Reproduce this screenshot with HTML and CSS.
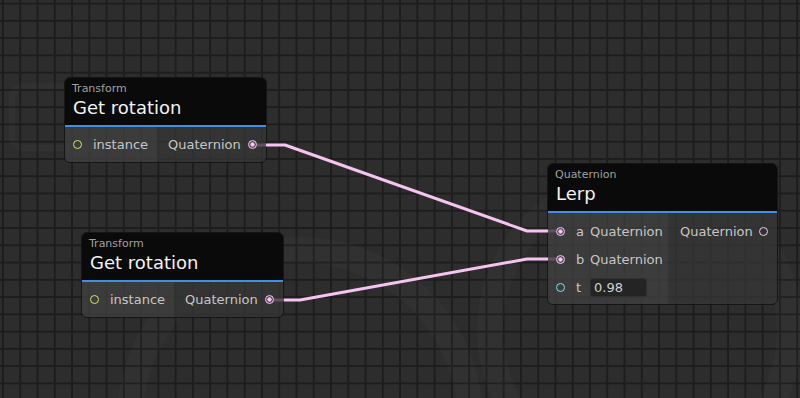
FILE: index.html
```html
<!DOCTYPE html>
<html lang="en">
<head>
  <meta charset="UTF-8">
  <meta name="viewport" content="width=device-width, initial-scale=1.0">
  <title>Node graph</title>
  <link rel="stylesheet" href="styles.css">
</head>
<body>

  <div class="canvas">

    <!-- faint logo behind the grid nodes -->
    <svg class="backdrop" width="800" height="398" viewBox="0 0 800 398">
      <g fill="none" stroke="#ffffff" stroke-opacity="0.018">
        <rect x="12" y="86" width="90" height="62" rx="12" stroke-width="7"/>
        <circle cx="300" cy="420" r="170" stroke-width="26"/>
        <circle cx="640" cy="330" r="150" stroke-width="26"/>
      </g>
    </svg>

    <!-- Get rotation #1 -->
    <div class="node node-rot1">
      <div class="node-head">
        <div class="node-cat">Transform</div>
        <div class="node-title">Get rotation</div>
      </div>
      <div class="node-body">
        <div class="col-in">
          <div class="row">
            <span class="port port-lime"></span>
            <span class="label">instance</span>
          </div>
        </div>
        <div class="col-out">
          <div class="row row-out">
            <span class="label">Quaternion</span>
            <span class="port port-pink linked"></span>
          </div>
        </div>
      </div>
    </div>

    <!-- Get rotation #2 -->
    <div class="node node-rot2">
      <div class="node-head">
        <div class="node-cat">Transform</div>
        <div class="node-title">Get rotation</div>
      </div>
      <div class="node-body">
        <div class="col-in">
          <div class="row">
            <span class="port port-lime"></span>
            <span class="label">instance</span>
          </div>
        </div>
        <div class="col-out">
          <div class="row row-out">
            <span class="label">Quaternion</span>
            <span class="port port-pink linked"></span>
          </div>
        </div>
      </div>
    </div>

    <!-- Lerp -->
    <div class="node node-lerp">
      <div class="node-head">
        <div class="node-cat">Quaternion</div>
        <div class="node-title">Lerp</div>
      </div>
      <div class="node-body body-tall">
        <div class="col-in col-wide">
          <div class="row">
            <span class="port port-pink linked"></span>
            <span class="pin-name">a</span>
            <span class="label">Quaternion</span>
          </div>
          <div class="row">
            <span class="port port-pink linked"></span>
            <span class="pin-name">b</span>
            <span class="label">Quaternion</span>
          </div>
          <div class="row">
            <span class="port port-cyan"></span>
            <span class="pin-name">t</span>
            <span class="value-box">0.98</span>
          </div>
        </div>
        <div class="col-out">
          <div class="row row-out">
            <span class="label">Quaternion</span>
            <span class="port port-pink"></span>
          </div>
        </div>
      </div>
    </div>

    <!-- connections -->
    <svg class="wires" width="800" height="398" viewBox="0 0 800 398">
      <g stroke="#5f525d" stroke-width="3" fill="none">
        <line x1="257" y1="145" x2="266" y2="145"/>
        <line x1="274" y1="300" x2="284" y2="300"/>
        <line x1="548" y1="231" x2="556" y2="231"/>
        <line x1="548" y1="259" x2="556" y2="259"/>
      </g>
      <g stroke="#f6c4f0" stroke-width="3" fill="none" stroke-linejoin="round">
        <polyline points="266,145 285,145 527,231 548,231"/>
        <polyline points="284,300 300,300 527,259 548,259"/>
      </g>
    </svg>

  </div>

</body>
</html>
```

FILE: styles.css
```css
* {
  box-sizing: border-box;
}

html, body {
  margin: 0;
  padding: 0;
}

body {
  background-color: #2d2d2d;
  font-family: "DejaVu Sans", Verdana, sans-serif;
  overflow: hidden;
}

.canvas {
  position: relative;
  width: 800px;
  height: 398px;
  background-color: #2d2d2d;
  background-image:
    linear-gradient(to right, #1d1d1d 1.5px, transparent 1.5px),
    linear-gradient(to bottom, #1d1d1d 1.5px, transparent 1.5px);
  background-size: 17.27px 17.27px;
  background-position: 2px 2.6px;
  overflow: hidden;
}

.backdrop, .wires {
  position: absolute;
  left: 0;
  top: 0;
  pointer-events: none;
}

.wires {
  z-index: 2;
}

/* nodes */
.node {
  position: absolute;
  z-index: 1;
  border: 1px solid #151515;
  border-radius: 6px;
  overflow: hidden;
}

.node-rot1 {
  left: 64px;
  top: 77px;
  width: 203px;
}

.node-rot2 {
  left: 81px;
  top: 232px;
  width: 203px;
}

.node-lerp {
  left: 547px;
  top: 163px;
  width: 231px;
}

.node-head {
  height: 49px;
  padding: 3px 8px 0 7px;
  background-color: #0a0a0a;
  border-bottom: 2px solid #3f8fe6;
}

.node-cat {
  font-size: 11px;
  line-height: 16px;
  color: #a0a0a0;
}

.node-title {
  font-size: 18px;
  line-height: 22px;
  color: #f2f2f2;
  padding-left: 1px;
}

.node-body {
  display: flex;
  height: 35px;
}

.body-tall {
  height: 91px;
}

.col-in {
  width: 92px;
  padding-top: 3px;
  background-color: rgba(64, 64, 64, 0.8);
}

.col-wide {
  width: 120px;
}

.col-out {
  flex: 1;
  padding-top: 3px;
  background-color: rgba(54, 54, 54, 0.78);
}

.body-tall .col-in,
.body-tall .col-out {
  padding-top: 4px;
}

.row {
  display: flex;
  align-items: center;
  height: 28px;
  padding-left: 8px;
}

.row-out {
  justify-content: space-between;
  padding: 0 9px 0 11px;
}

.node-lerp .row-out {
  padding-left: 12px;
}

.label {
  font-size: 13px;
  color: #c6c6c6;
}

.col-in .label {
  margin-left: 11px;
}

.pin-name {
  width: 14px;
  margin-left: 11px;
  font-size: 13px;
  color: #c6c6c6;
}

.col-in .pin-name + .label {
  margin-left: 0;
}

.value-box {
  width: 57px;
  height: 19px;
  padding-left: 3px;
  border-radius: 3px;
  background-color: #242424;
  border: 1px solid #303030;
  font-size: 13px;
  line-height: 17px;
  color: #d0d0d0;
}

/* ports */
.port {
  flex: none;
  width: 9px;
  height: 9px;
  border-radius: 50%;
  border: 1.5px solid;
}

.port-lime {
  border-color: #cfe96a;
}

.port-cyan {
  border-color: #7fe3ee;
}

.port-pink {
  border-color: #f5c6f0;
}

.port-pink.linked {
  background: radial-gradient(circle, #f5c6f0 0, #f5c6f0 1.8px, #5a4a58 2.4px);
}
```
